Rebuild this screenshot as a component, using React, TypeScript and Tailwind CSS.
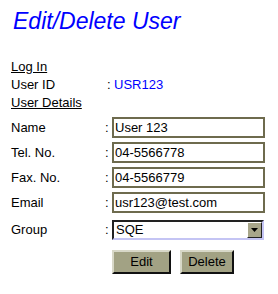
import { useState } from "react";

const fields = [
  { label: "Name", value: "User 123" },
  { label: "Tel. No.", value: "04-5566778" },
  { label: "Fax. No.", value: "04-5566779" },
  { label: "Email", value: "usr123@test.com" },
];

export default function App() {
  const [values, setValues] = useState(fields.map((f) => f.value));

  return (
    <div className="w-[278px] h-[294px] bg-white pl-[11px] font-['Liberation_Sans',Arial,sans-serif] text-[13px] leading-[18px] text-black">
      <h1 className="pt-[7px] pl-[2px] text-[23px] leading-[28px] italic text-[#0000ff]">Edit/Delete User</h1>

      <div className="mt-[23px]">
        <div className="underline">Log In</div>
        <div className="grid grid-cols-[96px_7px_1fr]">
          <span>User ID</span>
          <span>:</span>
          <span className="text-[#0000ff]">USR123</span>
        </div>
        <div className="underline">User Details</div>
      </div>

      <div className="mt-[5px] flex flex-col gap-[4px]">
        {fields.map((f, i) => (
          <div key={f.label} className="grid grid-cols-[94px_7px_153px] items-center h-[21px]">
            <span>{f.label}</span>
            <span>:</span>
            <input
              value={values[i]}
              onChange={(e) => setValues(values.map((v, j) => (j === i ? e.target.value : v)))}
              className="h-[21px] w-[153px] border-2 border-[#6e6b4e] px-[1px] text-[13px] outline-none"
            />
          </div>
        ))}
        <div className="grid grid-cols-[94px_7px_153px] items-center h-[20px] mt-[3px]">
          <span>Group</span>
          <span>:</span>
          <div className="flex h-[20px] w-[152px] border-2 border-t-[#222222] border-l-[#222222] border-b-[#c4c4f4] border-r-[#c4c4f4]">
            <span className="flex-1 pl-[2px] leading-[16px]">SQE</span>
            <span className="flex w-[15px] items-center justify-center border border-t-white border-l-white border-b-[#222222] border-r-[#222222] bg-[#a8a68a]">
              <svg width="7" height="4" viewBox="0 0 7 4">
                <path d="M0 0h7L3.5 4z" fill="#000" />
              </svg>
            </span>
          </div>
        </div>
      </div>

      <div className="mt-[10px] ml-[101px] flex gap-[9px]">
        <button className="h-[24px] w-[59px] border-2 border-t-[#d8d8c8] border-l-[#d8d8c8] border-b-[#111111] border-r-[#111111] bg-[#a2a284] text-[13px]">
          Edit
        </button>
        <button className="h-[24px] w-[54px] border-2 border-t-[#d8d8c8] border-l-[#d8d8c8] border-b-[#111111] border-r-[#111111] bg-[#a2a284] text-[13px]">
          Delete
        </button>
      </div>
    </div>
  );
}
